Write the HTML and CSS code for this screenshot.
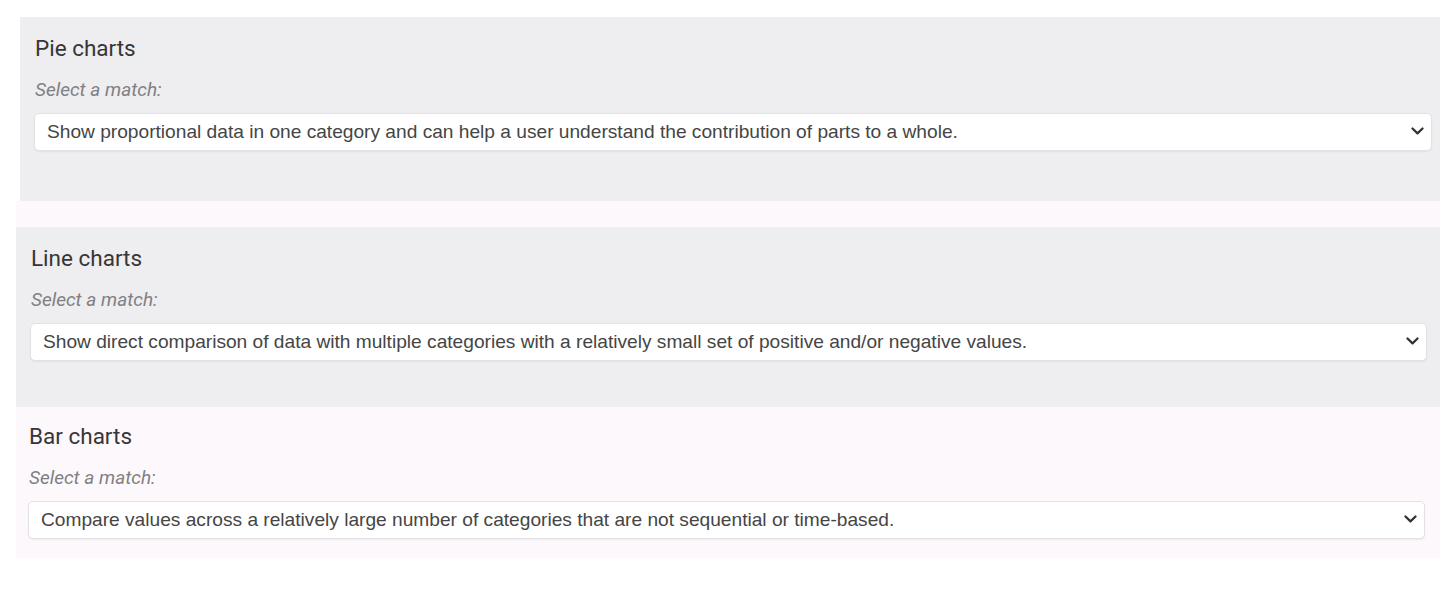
FILE: index.html
```html
<!DOCTYPE html>
<html lang="en">
<head>
<meta charset="utf-8">
<title>Match the chart types</title>
<link rel="stylesheet" href="styles.css">
</head>
<body>
<main class="quiz">
  <section class="card card--first">
    <h2 class="card__title">Pie charts</h2>
    <p class="card__hint">Select a match:</p>
    <div class="select">
      <span class="select__value">Show proportional data in one category and can help a user understand the contribution of parts to a whole.</span>
      <svg class="select__chevron" width="13" height="8" viewBox="0 0 13 8" aria-hidden="true"><path d="M1.5 1.5 L6.5 6.3 L11.5 1.5" fill="none" stroke="#333" stroke-width="2.3" stroke-linecap="round" stroke-linejoin="round"/></svg>
    </div>
  </section>
  <div class="group">
    <section class="card card--second">
      <h2 class="card__title">Line charts</h2>
      <p class="card__hint">Select a match:</p>
      <div class="select">
        <span class="select__value">Show direct comparison of data with multiple categories with a relatively small set of positive and/or negative values.</span>
        <svg class="select__chevron" width="13" height="8" viewBox="0 0 13 8" aria-hidden="true"><path d="M1.5 1.5 L6.5 6.3 L11.5 1.5" fill="none" stroke="#333" stroke-width="2.3" stroke-linecap="round" stroke-linejoin="round"/></svg>
      </div>
    </section>
    <section class="card card--third">
      <h2 class="card__title">Bar charts</h2>
      <p class="card__hint">Select a match:</p>
      <div class="select">
        <span class="select__value">Compare values across a relatively large number of categories that are not sequential or time-based.</span>
        <svg class="select__chevron" width="13" height="8" viewBox="0 0 13 8" aria-hidden="true"><path d="M1.5 1.5 L6.5 6.3 L11.5 1.5" fill="none" stroke="#333" stroke-width="2.3" stroke-linecap="round" stroke-linejoin="round"/></svg>
      </div>
    </section>
  </div>
</main>
</body>
</html>
```
FILE: styles.css
```css
* { box-sizing: border-box; }

html, body {
  margin: 0;
  padding: 0;
  background: #ffffff;
}

body {
  font-family: Roboto, "Liberation Sans", Arial, sans-serif;
  color: #333333;
}

.quiz {
  width: 1440px;
  padding-top: 17px;
}

.card {
  display: flex;
  flex-direction: column;
}

.card--first {
  margin-left: 20px;
  background: #eeedf0;
  padding: 18px 8px 50px 14px;
}

.group {
  margin-left: 16px;
  background: #fdf8fc;
  padding-top: 26px;
}

.card--second {
  background: #eeedf0;
  padding: 18px 13px 46px 14px;
}

.card--third {
  padding: 16px 15px 19px 12px;
}

.card__title {
  margin: 0;
  padding-left: 1px;
  font-family: Roboto, sans-serif;
  font-weight: 400;
  font-size: 22.5px;
  line-height: 27px;
  color: #363636;
}

.card__hint {
  margin: 16px 0 12px;
  padding-left: 1px;
  font-family: Roboto, sans-serif;
  font-style: italic;
  font-size: 19px;
  line-height: 23px;
  color: #808082;
}

.select {
  display: flex;
  align-items: center;
  justify-content: space-between;
  height: 38px;
  padding: 0 7px 0 12px;
  background: #ffffff;
  border: 1px solid #e2e1e5;
  border-radius: 5px;
  box-shadow: 0 1px 2px rgba(0, 0, 0, 0.06);
}

.select__value {
  font-family: "Liberation Sans", Arial, sans-serif;
  font-size: 19.15px;
  color: #454545;
  white-space: nowrap;
}

.select__chevron {
  flex: none;
  margin-top: -2px;
}
```
